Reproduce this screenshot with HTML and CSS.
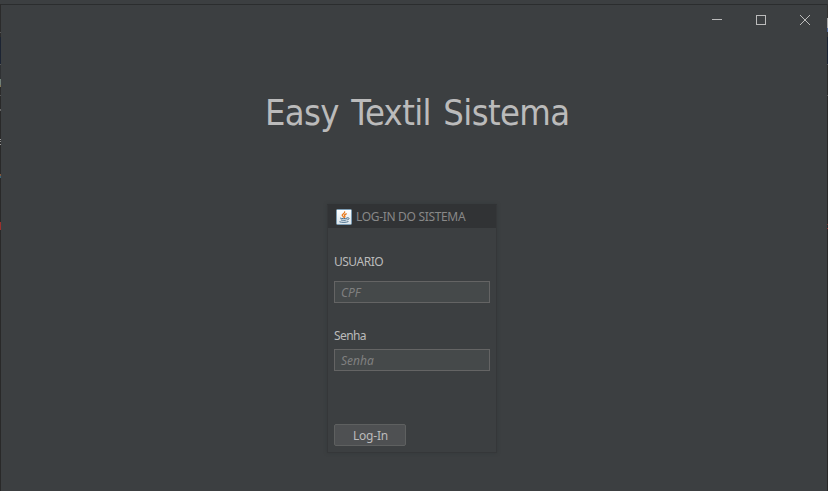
FILE: index.html
```html
<!DOCTYPE html>
<html lang="pt-BR">
<head>
<meta charset="utf-8">
<title>Easy Textil Sistema</title>
<link rel="stylesheet" href="styles.css">
</head>
<body>
<div class="desktop">
  <div class="edge edge-left"></div>
  <main class="window">
    <header class="titlebar">
      <svg class="control" viewBox="0 0 44 30" shape-rendering="crispEdges"><path d="M17 14.5h10"/></svg>
      <svg class="control" viewBox="0 0 44 30" shape-rendering="crispEdges"><path d="M17.500 10.500h9v9h-9z"/></svg>
      <svg class="control" viewBox="0 0 44 30"><path d="M17 10l10 10M27 10L17 20"/></svg>
    </header>
    <h1 class="title">Easy Textil Sistema</h1>
    <section class="login">
      <div class="login-head">
        <svg class="java" viewBox="0 0 16 16">
          <defs><linearGradient id="tile" x2="0" y2="1"><stop stop-color="#fff"/><stop offset="1" stop-color="#dce6ec"/></linearGradient></defs>
          <rect x=".5" y=".5" width="15" height="15" rx="1" fill="url(#tile)" stroke="#7c9cb4"/>
          <g fill="none" stroke-linecap="round">
            <path d="M8.700 2.800c.5 1.500-3 2.200-2.500 3.600.2.700 1.100 1.100 1.500 1.800M10.300 4.800C8.900 5.400 8 6 8.700 6.700c.5.600.3 1-.2 1.500" stroke="#e87a1e" stroke-width="1.300"/>
            <path d="M4.500 9.200c1.500.6 4.500.6 6.300 0M5.200 11c1.500.5 3.600.5 5 0M3.800 12.900c2 .7 6.300.7 8.300-.2M11.300 8.800c2.500-.5 2.400 1.600.3 2" stroke="#496f8d"/>
          </g>
        </svg>
        <span class="login-title">LOG-IN DO SISTEMA</span>
      </div>
      <form class="form">
        <label class="label user-label" for="user">USUARIO</label>
        <input class="field" id="user" type="text" placeholder="CPF">
        <label class="label pass-label" for="pass">Senha</label>
        <input class="field" id="pass" type="password" placeholder="Senha">
        <button class="submit" type="button">Log-In</button>
      </form>
    </section>
  </main>
  <div class="edge edge-right"></div>
</div>
</body>
</html>
```
FILE: styles.css
```css
* { box-sizing: border-box; }
body {
  margin: 0;
  background: #3c3f41;
  color: #bbb;
  font: 12px/16px "Noto Sans", "Open Sans", sans-serif;
  overflow: hidden;
}
.desktop {
  display: grid;
  grid-template-columns: 1px 1fr 1px;
  height: 491px;
  padding-top: 4px;
}
.edge-left {
  background: linear-gradient(#2b2b2b 0 28px, #555 28px 29px, #2b2b2b 29px 33px, #1c2433 33px 60px, #555 60px 61px, #2f3133 61px 75px, #718078 75px 81px, #807658 81px 83px, #2b2b2b 83px 91px, #555 91px 92px, #292929 92px 105px, #666 105px 107px, #292929 107px 135px, #999 135px 136px, #292929 136px 137px, #888 137px 138px, #292929 138px 140px, #999 140px 141px, #292929 141px 170px, #80583d 170px 172px, #386478 172px 174px, #292929 174px 218px, #9b302c 218px 226px, #292929 226px);
}
.edge-right {
  background: linear-gradient(#333 0 14px, #aaa 14px 24px, #52699a 24px 28px, #333 28px 33px, #1c2433 33px 60px, #555 60px 61px, #2b2b2b 61px 91px, #555 91px 92px, #292929 92px 220px, #75302d 220px 221px, #292929 221px 224px, #8d302d 224px 225px, #292929 225px);
}
.window {
  border-top: 1px solid #2b2d2e;
  display: flex;
  flex-direction: column;
}
.titlebar {
  display: flex;
  justify-content: flex-end;
  height: 30px;
}
.control {
  width: 44px;
  height: 30px;
  fill: none;
  stroke: #bbb;
}
.title {
  margin: 53px 0 0 264px;
  font: 36px/50px "DejaVu Sans", sans-serif;
  letter-spacing: -0.7px;
  word-spacing: 3px;
  white-space: nowrap;
  transform: scaleX(.9);
  transform-origin: 0 50%;
}
.login {
  width: 170px;
  height: 249px;
  margin: 66px 0 0 326px;
  border: 1px solid #353739;
  border-top-color: #313335;
  box-shadow: 0 0 3px #34373a;
}
.login-head {
  display: flex;
  align-items: center;
  height: 23px;
  padding-left: 8px;
  background: #313335;
  color: #888;
}
.java {
  width: 16px;
  height: 16px;
  margin-right: 4px;
}
.login-title { letter-spacing: -0.32px; }
.form {
  display: flex;
  flex-direction: column;
  padding: 0 6px;
}
.label { height: 16px; }
.user-label { margin-top: 26px; letter-spacing: -0.5px; }
.pass-label { margin-top: 25px; letter-spacing: -0.6px; }
.field {
  height: 22px;
  padding: 0 6px;
  border: 1px solid #646464;
  border-radius: 0;
  background: #45494a;
  color: #bbb;
  font: inherit;
  outline: 0;
}
.field::placeholder {
  color: #808080;
  font-style: italic;
  opacity: 1;
}
#user { margin-top: 11px; }
#pass { margin-top: 5px; }
.submit {
  width: 72px;
  height: 22px;
  margin-top: 53px;
  padding: 1px 0 0 1px;
  border: 1px solid #5e6060;
  border-radius: 2px;
  background: #4e5052;
  color: #bbb;
  font: inherit;
  letter-spacing: -0.2px;
}
```
